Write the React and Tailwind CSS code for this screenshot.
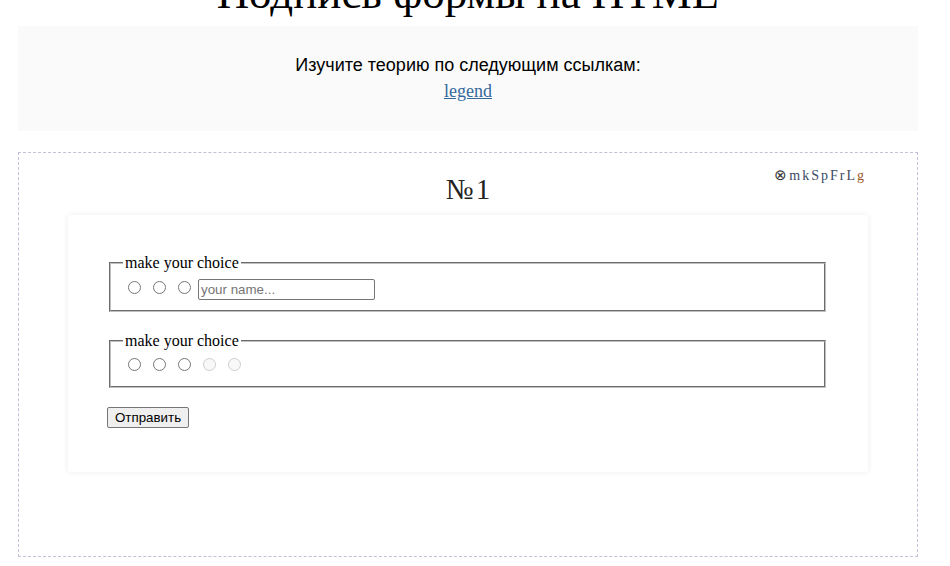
export default function App() {
  const radio = "ml-[5px] mr-[3px] mt-[3px] align-[-1px] w-[13px] h-[13px]";
  return (
    <div className="w-[950px] h-[566px] overflow-hidden bg-white" style={{ fontFamily: '"Liberation Serif", serif' }}>
      <div className="ml-[18px] w-[900px]">
        <h1 className="mt-[-33px] mb-[6px] text-center text-[45px] leading-[53px] text-black" style={{ fontFamily: '"Liberation Serif", serif' }}>
          Подпись формы на HTML
        </h1>
        <div className="bg-[#fafafa] h-[105px] flex flex-col items-center pt-[28px]">
          <p className="text-[18px] leading-[22px] text-black" style={{ fontFamily: '"Liberation Sans", Arial, sans-serif' }}>
            Изучите теорию по следующим ссылкам:
          </p>
          <a href="#" className="mt-[4px] text-[18px] leading-[22px] text-[#35699c] underline" style={{ fontFamily: '"Liberation Serif", serif' }}>
            legend
          </a>
        </div>
        <div className="relative mt-[21px] h-[405px] border border-dashed border-[#c5bfd6] flex flex-col items-center">
          <div className="absolute top-[13px] right-[51px] text-[14px] leading-[18px] tracking-[2px] text-[#3b4a66]">
            <span className="text-[#333] text-[15px]">⊗</span>mkSpFr<span className="text-[#4a4a5a]">L</span><span className="text-[#9a5a2a]">g</span>
          </div>
          <div className="mt-[19px] text-[29px] leading-[34px] text-[#222]">№&#8202;1</div>
          <div className="mt-[9px] w-[800px] bg-white shadow-[0_0_6px_rgba(0,0,0,0.08)] rounded-[3px] px-[39px] pt-[39px] pb-[44px]">
            <form className="flex flex-col items-start text-[16px] text-black">
              <fieldset className="mx-[2px] w-[717px] border-2 [border-style:groove] border-[#c0c0c0] px-[12px] pt-[6px] pb-[10px]">
                <legend className="px-[2px] text-[16px] leading-[18px]">make your choice</legend>
                <div className="leading-[20px] whitespace-nowrap">
                  <input type="radio" name="a" className={radio} />{" "}
                  <input type="radio" name="a" className={radio} />{" "}
                  <input type="radio" name="a" className={radio} />{" "}
                  <input
                    type="text"
                    placeholder="your name..."
                    className="w-[177px] h-[21px] align-middle border border-[#767676] rounded-[2px] px-[2px] text-[13.33px] placeholder-[#757575] outline-none"
                    style={{ fontFamily: '"Liberation Sans", Arial, sans-serif' }}
                  />
                </div>
              </fieldset>
              <fieldset className="mt-[20px] mx-[2px] w-[717px] border-2 [border-style:groove] border-[#c0c0c0] px-[12px] pt-[5px] pb-[11px]">
                <legend className="px-[2px] text-[16px] leading-[18px]">make your choice</legend>
                <div className="leading-[20px] whitespace-nowrap">
                  <input type="radio" name="b" className={radio} />{" "}
                  <input type="radio" name="b" className={radio} />{" "}
                  <input type="radio" name="b" className={radio} />{" "}
                  <input type="radio" name="b" disabled className={radio} />{" "}
                  <input type="radio" name="b" disabled className={radio} />
                </div>
              </fieldset>
              <button
                type="button"
                className="mt-[19px] h-[21px] px-[7px] border border-[#767676] rounded-[2px] bg-[#efefef] text-[13.33px] leading-[15px] text-black"
                style={{ fontFamily: '"Liberation Sans", Arial, sans-serif' }}
              >
                Отправить
              </button>
            </form>
          </div>
        </div>
      </div>
    </div>
  );
}
